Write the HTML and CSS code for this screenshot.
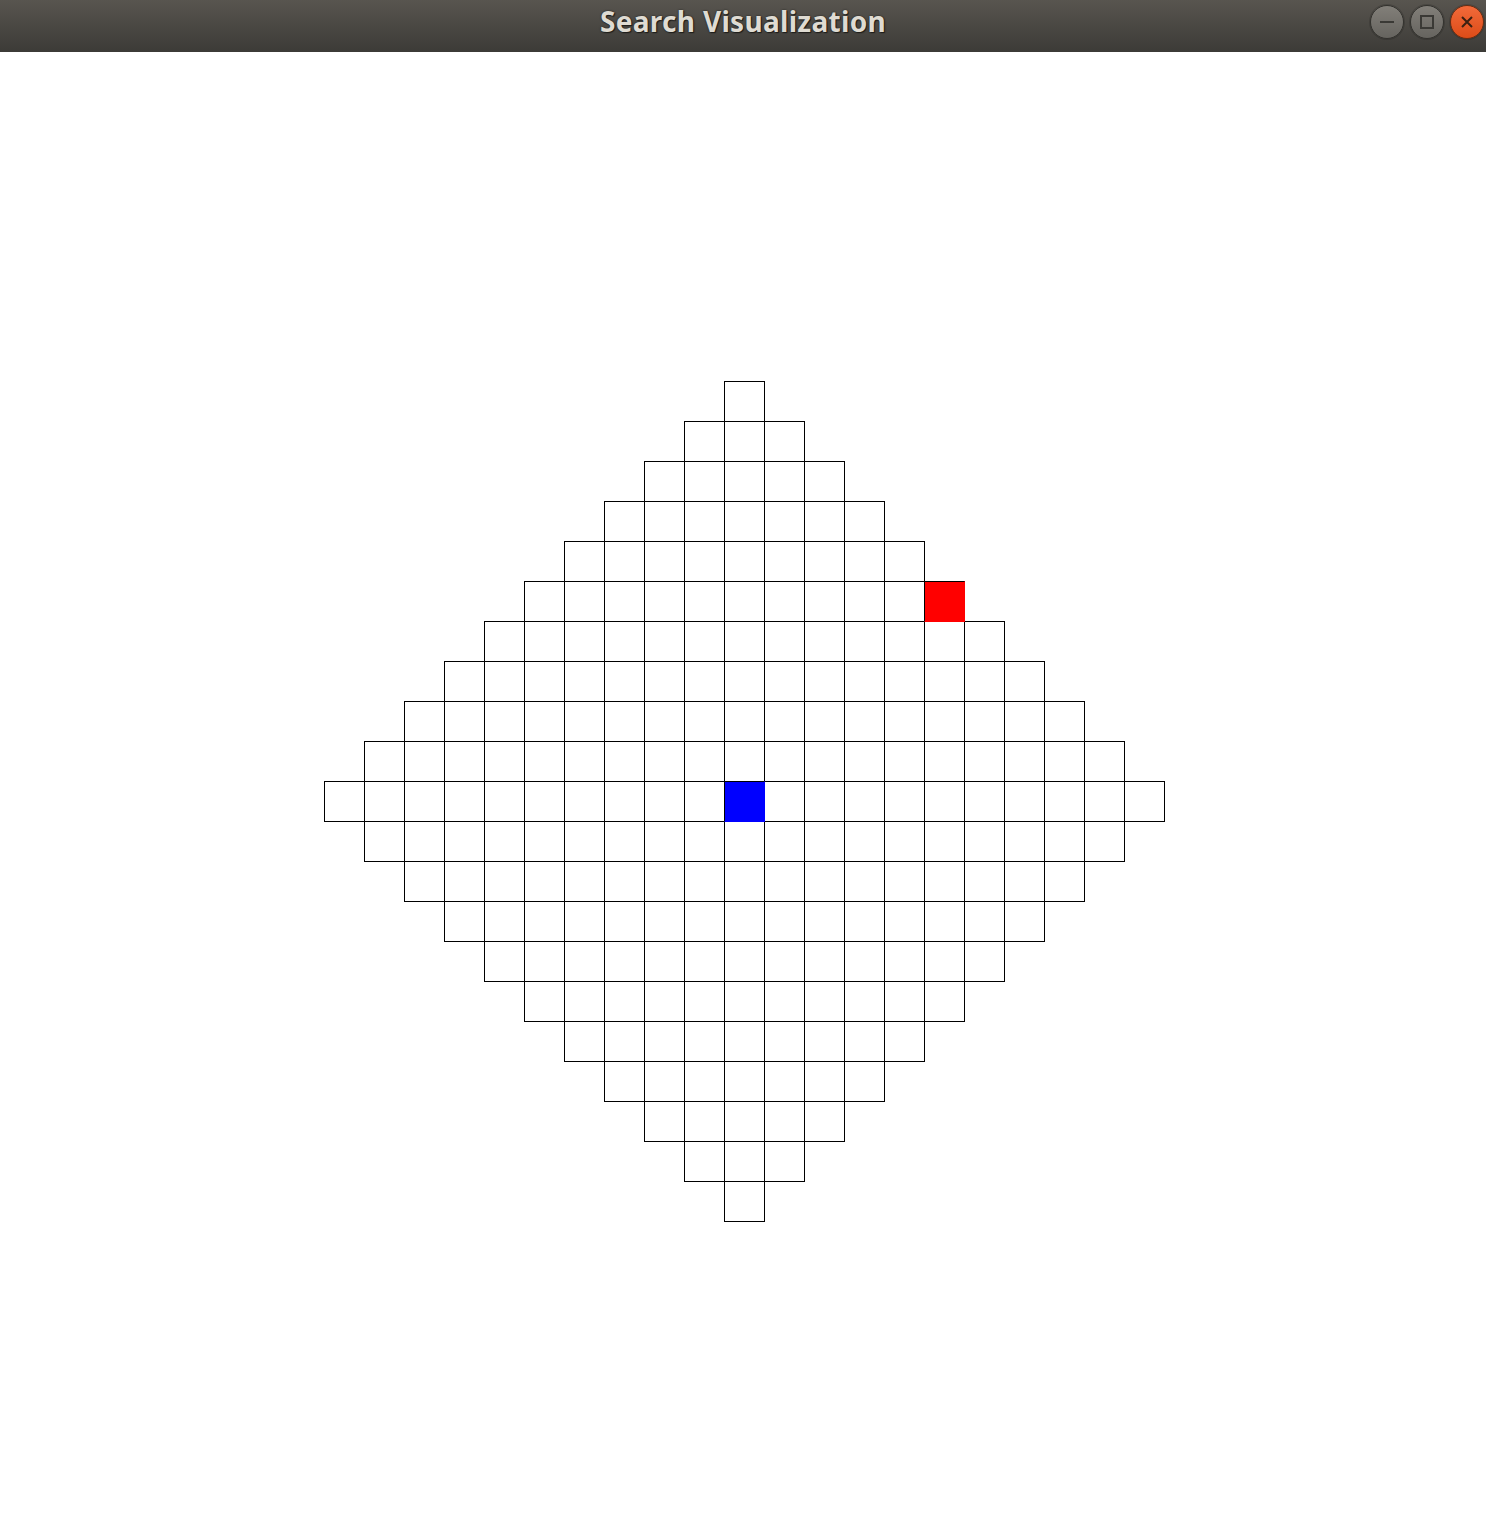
FILE: index.html
```html
<!DOCTYPE html>
<html>
<head>
<meta charset="utf-8">
<title>Search Visualization</title>
<link rel="stylesheet" href="styles.css">
</head>
<body>
<div class="window">
  <header class="titlebar">
    <div class="title">Search Visualization</div>
    <div class="controls">
      <span class="btn btn-min"><svg width="20" height="20" viewBox="0 0 20 20"><line x1="3" y1="10" x2="17" y2="10" stroke="#3a3935" stroke-width="2"/></svg></span>
      <span class="btn btn-max"><svg width="20" height="20" viewBox="0 0 20 20"><rect x="4" y="4" width="12" height="12" fill="none" stroke="#3a3935" stroke-width="2"/></svg></span>
      <span class="btn btn-close"><svg width="20" height="20" viewBox="0 0 20 20"><path d="M5 5 L15 15 M15 5 L5 15" stroke="#3a2012" stroke-width="2"/></svg></span>
    </div>
  </header>
  <main class="canvas">
    <div class="diamond" id="diamond"></div>
  </main>
</div>
<script src="app.js"></script>
</body>
</html>
```
FILE: app.js
```js
(function () {
  var d = document.getElementById('diamond');
  var N = 21, half = 10;
  for (var r = 0; r < N; r++) {
    var row = document.createElement('div');
    row.className = 'row';
    var k = Math.min(r, N - 1 - r);
    var n = 2 * k + 1;
    var startCol = half - k;
    for (var c = 0; c < n; c++) {
      var cell = document.createElement('div');
      cell.className = 'cell';
      var col = startCol + c;
      if (r === 5 && col === 15) cell.className += ' goal';
      if (r === 10 && col === 10) cell.className += ' start';
      row.appendChild(cell);
    }
    d.appendChild(row);
  }
})();
```
FILE: styles.css
```css
html, body {
  margin: 0;
  padding: 0;
  background: #ffffff;
}
.window {
  width: 1486px;
  min-height: 1526px;
  display: flex;
  flex-direction: column;
}
.titlebar {
  height: 52px;
  flex: 0 0 52px;
  background: linear-gradient(to bottom, #58554f 0%, #4a4843 50%, #3c3b37 100%);
  position: relative;
  display: flex;
  align-items: center;
  justify-content: center;
}
.title {
  font-family: "Noto Sans", "Open Sans", sans-serif;
  font-weight: 700;
  font-size: 28px;
  color: #dfdbd2;
  text-shadow: 0 0 2px #1e1d1a, 1px 1px 1px #1e1d1a;
  letter-spacing: 0.3px;
  margin-top: -10px;
}
.controls {
  position: absolute;
  right: 2px;
  top: 5px;
  display: flex;
  gap: 6px;
}
.btn {
  width: 34px;
  height: 34px;
  box-sizing: border-box;
  border-radius: 50%;
  border: 1px solid #33322e;
  display: flex;
  align-items: center;
  justify-content: center;
  background: linear-gradient(to bottom, #827f79, #66645f);
  box-shadow: 0 0 0 1px rgba(0,0,0,0.15);
}
.btn-close {
  background: linear-gradient(to bottom, #f26a3a, #dc4c18);
  border-color: #6a2d12;
}
.canvas {
  flex: 1;
  padding-top: 329px;
  padding-left: 324px;
}
.diamond {
  width: 840px;
  display: flex;
  flex-direction: column;
}
.row {
  display: flex;
  justify-content: center;
  height: 40px;
}
.cell {
  width: 41px;
  height: 41px;
  flex: 0 0 41px;
  margin-right: -1px;
  box-sizing: border-box;
  border: 1px solid #000000;
  background: transparent;
}
.cell:last-child {
  margin-right: 0;
}
.goal {
  background: #ff0000;
  border-right-color: #ff0000;
  border-bottom-color: #ff0000;
  position: relative;
  z-index: 1;
}
.start {
  background: #0000ff;
  border-right-color: #0000ff;
  border-bottom-color: #0000ff;
  position: relative;
  z-index: 1;
}
```
